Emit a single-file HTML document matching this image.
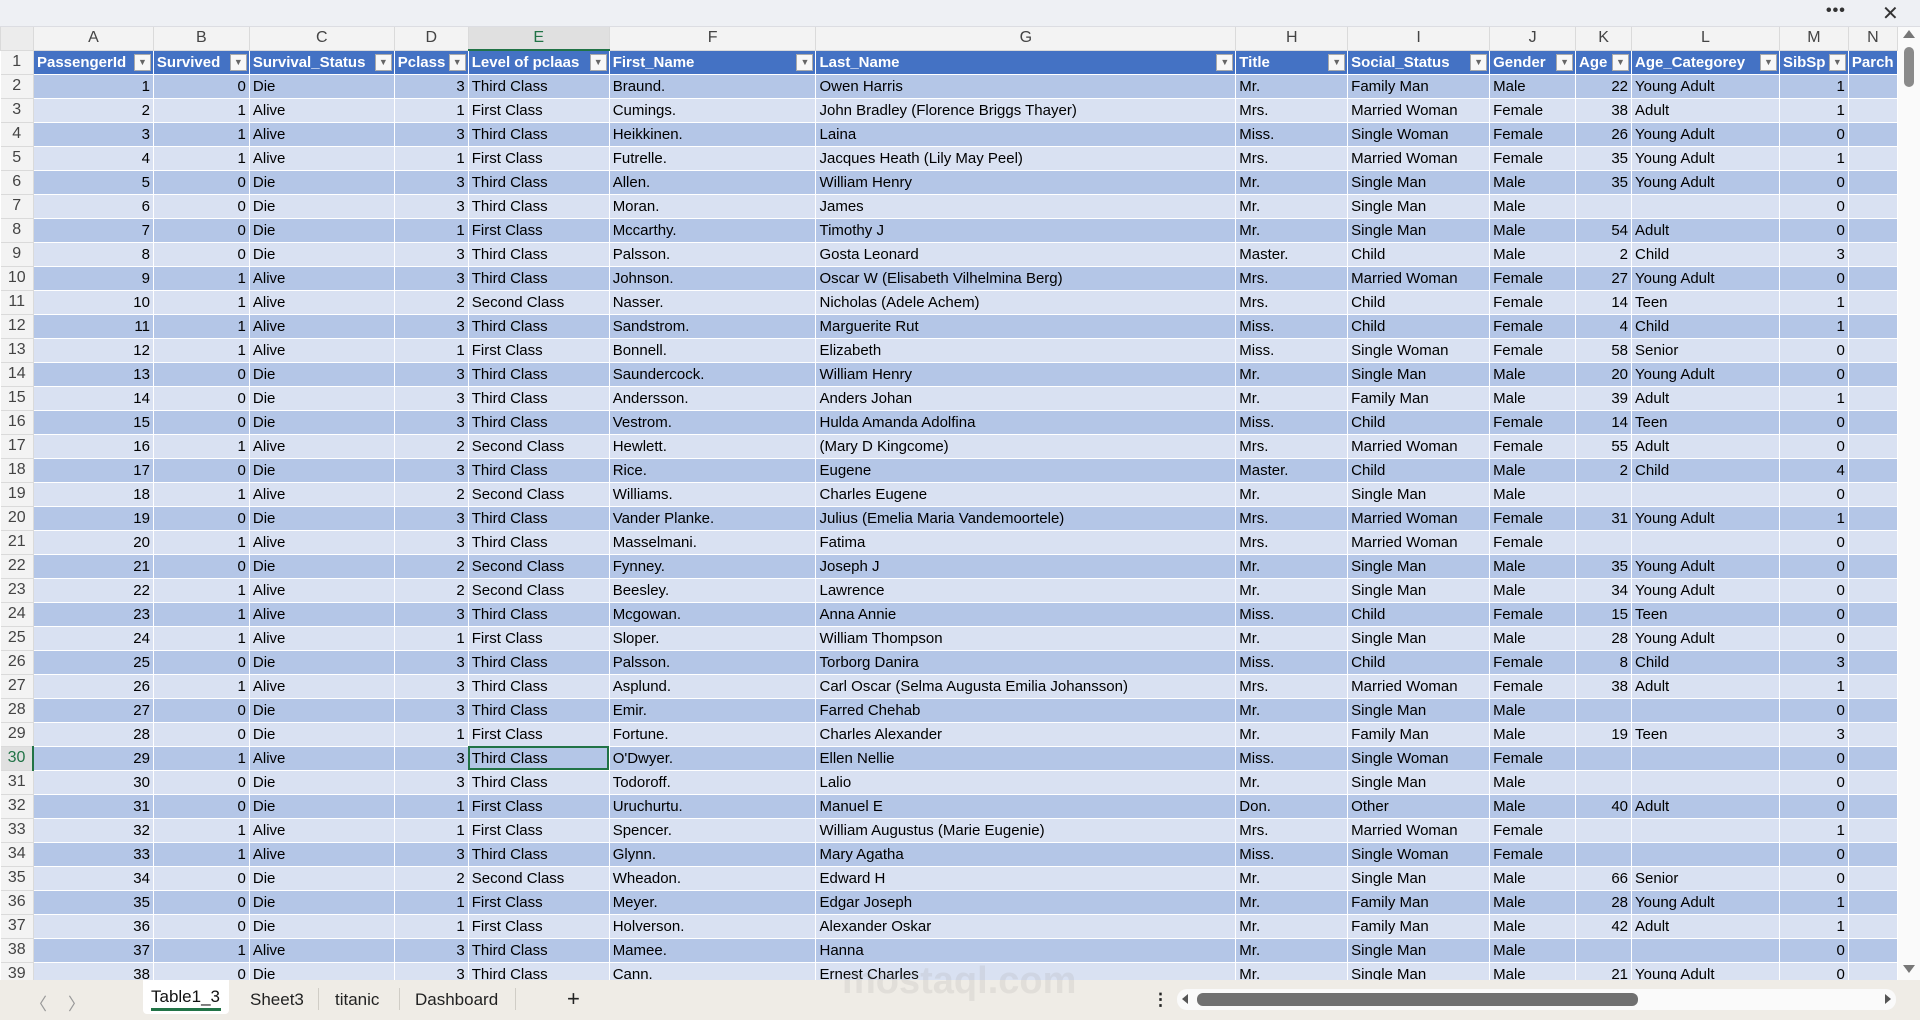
<!DOCTYPE html>
<html><head><meta charset="utf-8">
<style>
*{margin:0;padding:0;box-sizing:border-box}
body{width:1920px;height:1020px;overflow:hidden;background:#fff;font-family:"Liberation Sans",sans-serif;position:relative}
#top{position:absolute;left:0;top:0;width:1920px;height:27px;background:#eef0f4;border-bottom:1px solid #dcdde2}
#top .dots{position:absolute;left:1826px;top:2px;font-size:16px;letter-spacing:1px;color:#333;font-weight:bold}
#top .x{position:absolute;left:1882px;top:1px;font-size:20px;color:#333}
#grid{position:absolute;left:0;top:27px;width:1898px;height:953px;overflow:hidden}
table{border-collapse:collapse;table-layout:fixed;font-size:15px}
td,th{height:24px;white-space:nowrap;overflow:hidden;padding:0 3px;border:1px solid #fff;color:#000;font-weight:normal;text-align:left;vertical-align:middle}
tr.ch td{height:23px;background:#f3f3f3;color:#444;text-align:center;font-size:16px;border:1px solid #dadada;border-top:none;padding:0}
tr.ch td.sel{background:#e0e0e0;border-bottom:2px solid #217346;color:#217346}
td.rn{background:#f3f3f3;color:#444;text-align:center;font-size:16px;border:1px solid #dadada;border-left:none;padding:0}
td.rn.sel{background:#e0e0e0;color:#217346;border-right:2px solid #217346}
tr.h td{background:#4472c4;color:#fff;font-weight:bold;position:relative}
tr.h td.rn{background:#f3f3f3;color:#444;font-weight:normal}
.fb{position:absolute;right:2px;top:3px;width:17px;height:17px;background:#f7f7f7;border:1px solid #aaa;color:#666;font-size:9px;line-height:15px;text-align:center;font-weight:normal}
tr.d td{background:#b4c6e7}
tr.l td{background:#d9e1f2}
tr.d td.rn,tr.l td.rn{background:#f3f3f3}
tr.d td.rn.sel{background:#e0e0e0}
tr.d td:nth-child(2),tr.d td:nth-child(3),tr.d td:nth-child(5),tr.d td:nth-child(12),tr.d td:nth-child(14),
tr.l td:nth-child(2),tr.l td:nth-child(3),tr.l td:nth-child(5),tr.l td:nth-child(12),tr.l td:nth-child(14){text-align:right}
td.cur{outline:2px solid #217346;outline-offset:-2px}
#vs{position:absolute;left:1898px;top:27px;width:22px;height:953px;background:#fafafa}
#vs .th{position:absolute;left:6px;top:20px;width:10px;height:40px;background:#8a8a8a;border-radius:5px}
#vs .up{position:absolute;left:5px;top:3px;width:0;height:0;border-left:6px solid transparent;border-right:6px solid transparent;border-bottom:8px solid #777}
#vs .dn{position:absolute;left:5px;top:938px;width:0;height:0;border-left:6px solid transparent;border-right:6px solid transparent;border-top:8px solid #777}
#bot{position:absolute;left:0;top:980px;width:1920px;height:40px;background:#efece6}
#bot span{position:absolute;top:10px;font-size:17px;color:#222}
.tab1{position:absolute;left:143px;top:0;width:86px;height:34px;background:#fff;border-radius:0 0 4px 4px}
.tab1 b{position:absolute;left:8px;top:7px;font-weight:normal;font-size:17px;color:#111}
.tab1 i{position:absolute;left:8px;top:28px;width:70px;height:3px;background:#217346}
.sep{position:absolute;top:8px;width:1px;height:22px;background:#d0cdc6}
#track{position:absolute;left:1177px;top:9px;width:719px;height:21px;background:#fafafa;border-radius:10px}
#thumb{position:absolute;left:20px;top:4px;width:441px;height:13px;background:#707070;border-radius:6px}
#wm{position:absolute;left:842px;top:960px;font-size:38px;color:rgba(160,160,160,.18);font-weight:bold;z-index:5}
</style></head><body>
<div id="top"><span class="dots">•••</span><span class="x">✕</span></div>
<div id="grid">
<table>
<colgroup><col style="width:33px"><col style="width:120px"><col style="width:96px"><col style="width:145px"><col style="width:74px"><col style="width:141px"><col style="width:207px"><col style="width:420px"><col style="width:112px"><col style="width:142px"><col style="width:86px"><col style="width:56px"><col style="width:148px"><col style="width:69px"><col style="width:49px"></colgroup>
<tr class="ch"><td style="background:#ececec"></td><td>A</td><td>B</td><td>C</td><td>D</td><td class="sel">E</td><td>F</td><td>G</td><td>H</td><td>I</td><td>J</td><td>K</td><td>L</td><td>M</td><td>N</td></tr>
<tr class="h"><td class="rn">1</td><td>PassengerId<span class="fb">▼</span></td><td>Survived<span class="fb">▼</span></td><td>Survival_Status<span class="fb">▼</span></td><td>Pclass<span class="fb">▼</span></td><td>Level of pclaas<span class="fb">▼</span></td><td>First_Name<span class="fb">▼</span></td><td>Last_Name<span class="fb">▼</span></td><td>Title<span class="fb">▼</span></td><td>Social_Status<span class="fb">▼</span></td><td>Gender<span class="fb">▼</span></td><td>Age<span class="fb">▼</span></td><td>Age_Categorey<span class="fb">▼</span></td><td>SibSp<span class="fb">▼</span></td><td>Parch</td></tr>
<tr class="d"><td class="rn">2</td><td>1</td><td>0</td><td>Die</td><td>3</td><td>Third Class</td><td>Braund.</td><td>Owen Harris</td><td>Mr.</td><td>Family Man</td><td>Male</td><td>22</td><td>Young Adult</td><td>1</td><td></td></tr>
<tr class="l"><td class="rn">3</td><td>2</td><td>1</td><td>Alive</td><td>1</td><td>First Class</td><td>Cumings.</td><td>John Bradley (Florence Briggs Thayer)</td><td>Mrs.</td><td>Married Woman</td><td>Female</td><td>38</td><td>Adult</td><td>1</td><td></td></tr>
<tr class="d"><td class="rn">4</td><td>3</td><td>1</td><td>Alive</td><td>3</td><td>Third Class</td><td>Heikkinen.</td><td>Laina</td><td>Miss.</td><td>Single Woman</td><td>Female</td><td>26</td><td>Young Adult</td><td>0</td><td></td></tr>
<tr class="l"><td class="rn">5</td><td>4</td><td>1</td><td>Alive</td><td>1</td><td>First Class</td><td>Futrelle.</td><td>Jacques Heath (Lily May Peel)</td><td>Mrs.</td><td>Married Woman</td><td>Female</td><td>35</td><td>Young Adult</td><td>1</td><td></td></tr>
<tr class="d"><td class="rn">6</td><td>5</td><td>0</td><td>Die</td><td>3</td><td>Third Class</td><td>Allen.</td><td>William Henry</td><td>Mr.</td><td>Single Man</td><td>Male</td><td>35</td><td>Young Adult</td><td>0</td><td></td></tr>
<tr class="l"><td class="rn">7</td><td>6</td><td>0</td><td>Die</td><td>3</td><td>Third Class</td><td>Moran.</td><td>James</td><td>Mr.</td><td>Single Man</td><td>Male</td><td></td><td></td><td>0</td><td></td></tr>
<tr class="d"><td class="rn">8</td><td>7</td><td>0</td><td>Die</td><td>1</td><td>First Class</td><td>Mccarthy.</td><td>Timothy J</td><td>Mr.</td><td>Single Man</td><td>Male</td><td>54</td><td>Adult</td><td>0</td><td></td></tr>
<tr class="l"><td class="rn">9</td><td>8</td><td>0</td><td>Die</td><td>3</td><td>Third Class</td><td>Palsson.</td><td>Gosta Leonard</td><td>Master.</td><td>Child</td><td>Male</td><td>2</td><td>Child</td><td>3</td><td></td></tr>
<tr class="d"><td class="rn">10</td><td>9</td><td>1</td><td>Alive</td><td>3</td><td>Third Class</td><td>Johnson.</td><td>Oscar W (Elisabeth Vilhelmina Berg)</td><td>Mrs.</td><td>Married Woman</td><td>Female</td><td>27</td><td>Young Adult</td><td>0</td><td></td></tr>
<tr class="l"><td class="rn">11</td><td>10</td><td>1</td><td>Alive</td><td>2</td><td>Second Class</td><td>Nasser.</td><td>Nicholas (Adele Achem)</td><td>Mrs.</td><td>Child</td><td>Female</td><td>14</td><td>Teen</td><td>1</td><td></td></tr>
<tr class="d"><td class="rn">12</td><td>11</td><td>1</td><td>Alive</td><td>3</td><td>Third Class</td><td>Sandstrom.</td><td>Marguerite Rut</td><td>Miss.</td><td>Child</td><td>Female</td><td>4</td><td>Child</td><td>1</td><td></td></tr>
<tr class="l"><td class="rn">13</td><td>12</td><td>1</td><td>Alive</td><td>1</td><td>First Class</td><td>Bonnell.</td><td>Elizabeth</td><td>Miss.</td><td>Single Woman</td><td>Female</td><td>58</td><td>Senior</td><td>0</td><td></td></tr>
<tr class="d"><td class="rn">14</td><td>13</td><td>0</td><td>Die</td><td>3</td><td>Third Class</td><td>Saundercock.</td><td>William Henry</td><td>Mr.</td><td>Single Man</td><td>Male</td><td>20</td><td>Young Adult</td><td>0</td><td></td></tr>
<tr class="l"><td class="rn">15</td><td>14</td><td>0</td><td>Die</td><td>3</td><td>Third Class</td><td>Andersson.</td><td>Anders Johan</td><td>Mr.</td><td>Family Man</td><td>Male</td><td>39</td><td>Adult</td><td>1</td><td></td></tr>
<tr class="d"><td class="rn">16</td><td>15</td><td>0</td><td>Die</td><td>3</td><td>Third Class</td><td>Vestrom.</td><td>Hulda Amanda Adolfina</td><td>Miss.</td><td>Child</td><td>Female</td><td>14</td><td>Teen</td><td>0</td><td></td></tr>
<tr class="l"><td class="rn">17</td><td>16</td><td>1</td><td>Alive</td><td>2</td><td>Second Class</td><td>Hewlett.</td><td>(Mary D Kingcome)</td><td>Mrs.</td><td>Married Woman</td><td>Female</td><td>55</td><td>Adult</td><td>0</td><td></td></tr>
<tr class="d"><td class="rn">18</td><td>17</td><td>0</td><td>Die</td><td>3</td><td>Third Class</td><td>Rice.</td><td>Eugene</td><td>Master.</td><td>Child</td><td>Male</td><td>2</td><td>Child</td><td>4</td><td></td></tr>
<tr class="l"><td class="rn">19</td><td>18</td><td>1</td><td>Alive</td><td>2</td><td>Second Class</td><td>Williams.</td><td>Charles Eugene</td><td>Mr.</td><td>Single Man</td><td>Male</td><td></td><td></td><td>0</td><td></td></tr>
<tr class="d"><td class="rn">20</td><td>19</td><td>0</td><td>Die</td><td>3</td><td>Third Class</td><td>Vander Planke.</td><td>Julius (Emelia Maria Vandemoortele)</td><td>Mrs.</td><td>Married Woman</td><td>Female</td><td>31</td><td>Young Adult</td><td>1</td><td></td></tr>
<tr class="l"><td class="rn">21</td><td>20</td><td>1</td><td>Alive</td><td>3</td><td>Third Class</td><td>Masselmani.</td><td>Fatima</td><td>Mrs.</td><td>Married Woman</td><td>Female</td><td></td><td></td><td>0</td><td></td></tr>
<tr class="d"><td class="rn">22</td><td>21</td><td>0</td><td>Die</td><td>2</td><td>Second Class</td><td>Fynney.</td><td>Joseph J</td><td>Mr.</td><td>Single Man</td><td>Male</td><td>35</td><td>Young Adult</td><td>0</td><td></td></tr>
<tr class="l"><td class="rn">23</td><td>22</td><td>1</td><td>Alive</td><td>2</td><td>Second Class</td><td>Beesley.</td><td>Lawrence</td><td>Mr.</td><td>Single Man</td><td>Male</td><td>34</td><td>Young Adult</td><td>0</td><td></td></tr>
<tr class="d"><td class="rn">24</td><td>23</td><td>1</td><td>Alive</td><td>3</td><td>Third Class</td><td>Mcgowan.</td><td>Anna Annie</td><td>Miss.</td><td>Child</td><td>Female</td><td>15</td><td>Teen</td><td>0</td><td></td></tr>
<tr class="l"><td class="rn">25</td><td>24</td><td>1</td><td>Alive</td><td>1</td><td>First Class</td><td>Sloper.</td><td>William Thompson</td><td>Mr.</td><td>Single Man</td><td>Male</td><td>28</td><td>Young Adult</td><td>0</td><td></td></tr>
<tr class="d"><td class="rn">26</td><td>25</td><td>0</td><td>Die</td><td>3</td><td>Third Class</td><td>Palsson.</td><td>Torborg Danira</td><td>Miss.</td><td>Child</td><td>Female</td><td>8</td><td>Child</td><td>3</td><td></td></tr>
<tr class="l"><td class="rn">27</td><td>26</td><td>1</td><td>Alive</td><td>3</td><td>Third Class</td><td>Asplund.</td><td>Carl Oscar (Selma Augusta Emilia Johansson)</td><td>Mrs.</td><td>Married Woman</td><td>Female</td><td>38</td><td>Adult</td><td>1</td><td></td></tr>
<tr class="d"><td class="rn">28</td><td>27</td><td>0</td><td>Die</td><td>3</td><td>Third Class</td><td>Emir.</td><td>Farred Chehab</td><td>Mr.</td><td>Single Man</td><td>Male</td><td></td><td></td><td>0</td><td></td></tr>
<tr class="l"><td class="rn">29</td><td>28</td><td>0</td><td>Die</td><td>1</td><td>First Class</td><td>Fortune.</td><td>Charles Alexander</td><td>Mr.</td><td>Family Man</td><td>Male</td><td>19</td><td>Teen</td><td>3</td><td></td></tr>
<tr class="d"><td class="rn sel">30</td><td>29</td><td>1</td><td>Alive</td><td>3</td><td class="cur">Third Class</td><td>O'Dwyer.</td><td>Ellen Nellie</td><td>Miss.</td><td>Single Woman</td><td>Female</td><td></td><td></td><td>0</td><td></td></tr>
<tr class="l"><td class="rn">31</td><td>30</td><td>0</td><td>Die</td><td>3</td><td>Third Class</td><td>Todoroff.</td><td>Lalio</td><td>Mr.</td><td>Single Man</td><td>Male</td><td></td><td></td><td>0</td><td></td></tr>
<tr class="d"><td class="rn">32</td><td>31</td><td>0</td><td>Die</td><td>1</td><td>First Class</td><td>Uruchurtu.</td><td>Manuel E</td><td>Don.</td><td>Other</td><td>Male</td><td>40</td><td>Adult</td><td>0</td><td></td></tr>
<tr class="l"><td class="rn">33</td><td>32</td><td>1</td><td>Alive</td><td>1</td><td>First Class</td><td>Spencer.</td><td>William Augustus (Marie Eugenie)</td><td>Mrs.</td><td>Married Woman</td><td>Female</td><td></td><td></td><td>1</td><td></td></tr>
<tr class="d"><td class="rn">34</td><td>33</td><td>1</td><td>Alive</td><td>3</td><td>Third Class</td><td>Glynn.</td><td>Mary Agatha</td><td>Miss.</td><td>Single Woman</td><td>Female</td><td></td><td></td><td>0</td><td></td></tr>
<tr class="l"><td class="rn">35</td><td>34</td><td>0</td><td>Die</td><td>2</td><td>Second Class</td><td>Wheadon.</td><td>Edward H</td><td>Mr.</td><td>Single Man</td><td>Male</td><td>66</td><td>Senior</td><td>0</td><td></td></tr>
<tr class="d"><td class="rn">36</td><td>35</td><td>0</td><td>Die</td><td>1</td><td>First Class</td><td>Meyer.</td><td>Edgar Joseph</td><td>Mr.</td><td>Family Man</td><td>Male</td><td>28</td><td>Young Adult</td><td>1</td><td></td></tr>
<tr class="l"><td class="rn">37</td><td>36</td><td>0</td><td>Die</td><td>1</td><td>First Class</td><td>Holverson.</td><td>Alexander Oskar</td><td>Mr.</td><td>Family Man</td><td>Male</td><td>42</td><td>Adult</td><td>1</td><td></td></tr>
<tr class="d"><td class="rn">38</td><td>37</td><td>1</td><td>Alive</td><td>3</td><td>Third Class</td><td>Mamee.</td><td>Hanna</td><td>Mr.</td><td>Single Man</td><td>Male</td><td></td><td></td><td>0</td><td></td></tr>
<tr class="l"><td class="rn">39</td><td>38</td><td>0</td><td>Die</td><td>3</td><td>Third Class</td><td>Cann.</td><td>Ernest Charles</td><td>Mr.</td><td>Single Man</td><td>Male</td><td>21</td><td>Young Adult</td><td>0</td><td></td></tr>
</table>
</div>
<div id="vs"><div class="up"></div><div class="th"></div><div class="dn"></div></div>
<div id="wm">mostaql.com</div>
<div id="bot">
<span style="left:30px;color:#999">〈</span><span style="left:68px;color:#999">〉</span>
<div class="tab1"><b>Table1_3</b><i></i></div>
<span style="left:250px">Sheet3</span><div class="sep" style="left:318px"></div>
<span style="left:335px">titanic</span><div class="sep" style="left:399px"></div>
<span style="left:415px">Dashboard</span><div class="sep" style="left:515px"></div>
<span style="left:567px;font-size:22px;top:6px">+</span>
<span style="left:1152px;font-weight:bold">⋮</span>
<div id="track"><div id="thumb"></div>
<div style="position:absolute;left:5px;top:5px;border-top:5px solid transparent;border-bottom:5px solid transparent;border-right:6px solid #555"></div>
<div style="position:absolute;right:5px;top:5px;border-top:5px solid transparent;border-bottom:5px solid transparent;border-left:6px solid #555"></div>
</div>
</div>
</body></html>
